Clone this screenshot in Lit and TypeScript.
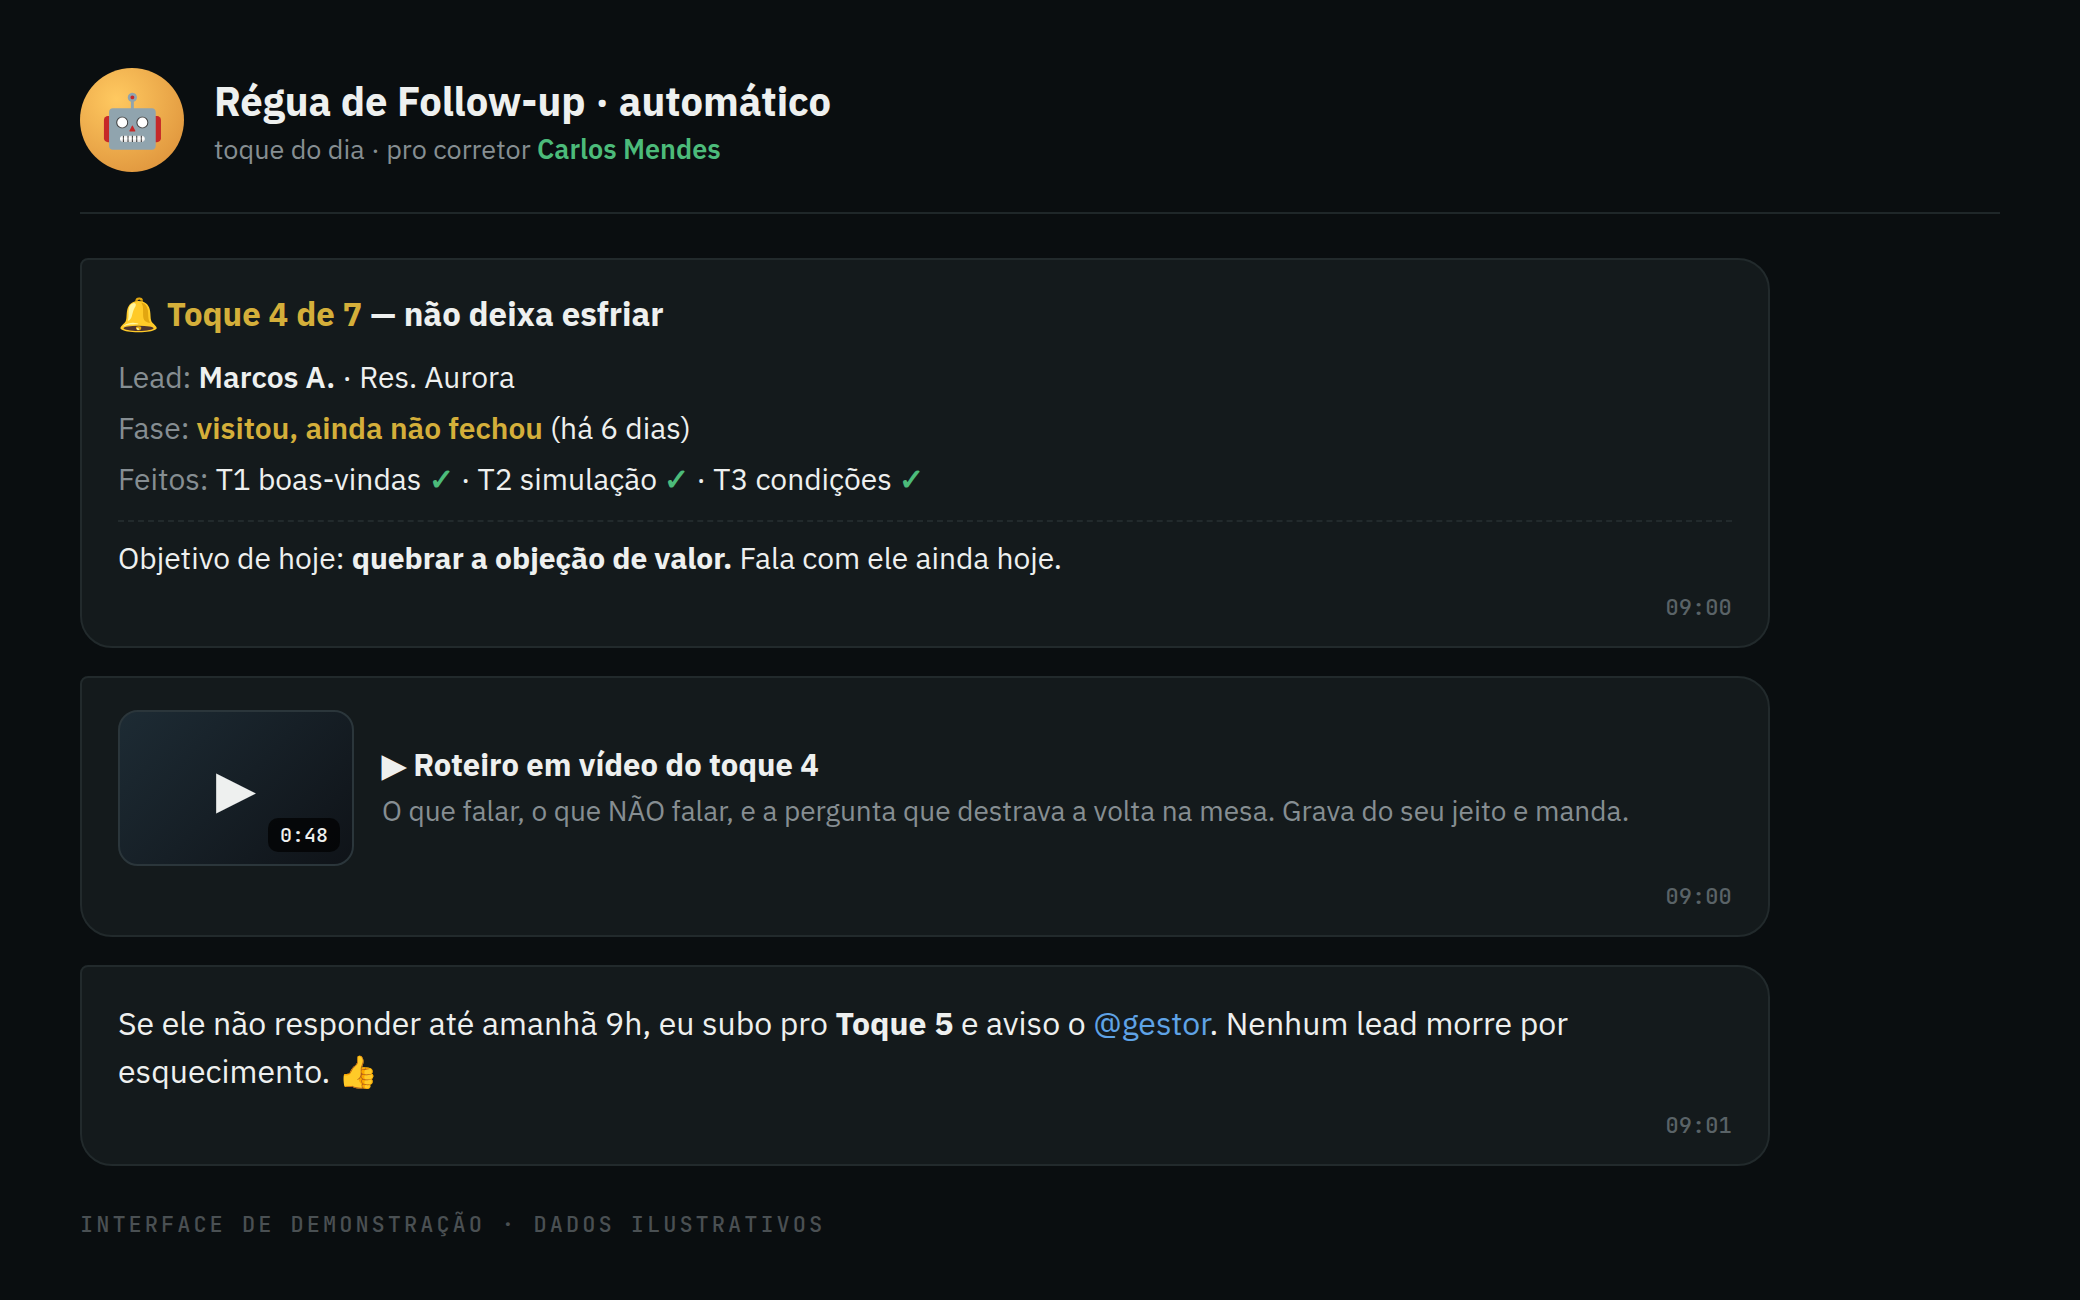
import { LitElement, html, css, type TemplateResult } from "lit";
import { customElement, property } from "lit/decorators.js";

@customElement("chat-bubble")
class ChatBubble extends LitElement {
  @property() time = "";

  static styles = css`
    :host {
      display: block;
    }
    .bubble {
      box-sizing: border-box;
      width: 88%;
      padding: 32px 36px 23px;
      border: 2px solid #222a2c;
      border-radius: 8px 32px 32px 32px;
      background: #141a1c;
    }
    .time {
      display: block;
      margin-top: 15px;
      color: #5a6367;
      font: 500 22px/31px "JetBrains Mono", "IBM Plex Mono", "Liberation Mono", monospace;
      text-align: right;
    }
  `;

  render(): TemplateResult {
    return html`
      <article class="bubble">
        <slot></slot>
        <time class="time">${this.time}</time>
      </article>
    `;
  }
}

@customElement("app-root")
class AppRoot extends LitElement {
  private steps = ["T1 boas-vindas", "T2 simulação", "T3 condições"];

  static styles = css`
    :host {
      display: block;
      box-sizing: border-box;
      min-height: 100vh;
      padding: 68px 80px 40px;
      background: #0a0e10;
      color: #eef0ef;
      font-family: "IBM Plex Sans", "Liberation Sans", sans-serif;
    }
    * {
      box-sizing: border-box;
    }
    h1,
    h2,
    h3,
    p {
      margin: 0;
    }
    strong {
      font-weight: 700;
    }
    .semibold {
      font-weight: 600;
    }
    .header {
      display: flex;
      align-items: center;
      gap: 30px;
      padding-bottom: 40px;
      border-bottom: 2px solid #1f2729;
    }
    .avatar {
      display: grid;
      place-items: center;
      flex: none;
      width: 104px;
      height: 104px;
      border-radius: 50%;
      background: radial-gradient(circle at 35% 30%, #ffc960, #d98b36);
      font-size: 52px;
      line-height: 60px;
    }
    .title {
      font-size: 40px;
      font-weight: 700;
      line-height: 58px;
    }
    .subtitle {
      color: #868e92;
      font-size: 27px;
      line-height: 38px;
    }
    .thread {
      display: flex;
      flex-direction: column;
      gap: 28px;
      margin-top: 44px;
    }
    .heading {
      margin-bottom: 15px;
      font-size: 33px;
      font-weight: 700;
      line-height: 44px;
    }
    .row {
      font-size: 30px;
      line-height: 51px;
    }
    .label {
      color: #868e92;
    }
    .amber {
      color: #d4af3a;
    }
    .green {
      color: #4cbb7a;
    }
    .check {
      color: #4cbb7a;
      font-family: "Liberation Sans", sans-serif;
      font-weight: 600;
    }
    .goal {
      margin-top: 15px;
      padding-top: 17px;
      border-top: 2px dashed #222a2c;
      font-size: 30px;
      line-height: 38px;
    }
    .video {
      display: flex;
      align-items: center;
      gap: 28px;
    }
    .thumb {
      position: relative;
      display: grid;
      place-items: center;
      flex: none;
      width: 236px;
      height: 156px;
      padding: 0;
      border: 2px solid #2b363b;
      border-radius: 20px;
      background: linear-gradient(135deg, #1d2b34, #0f1318);
      color: #eef0ef;
      font: 400 52px/60px "IBM Plex Sans", "Liberation Sans", sans-serif;
      cursor: pointer;
    }
    .duration {
      position: absolute;
      right: 12px;
      bottom: 12px;
      padding: 4px 12px;
      border-radius: 10px;
      background: rgba(0, 0, 0, 0.7);
      font: 500 20px/26px "JetBrains Mono", "IBM Plex Mono", "Liberation Mono", monospace;
    }
    .video-title {
      font-size: 31px;
      font-weight: 700;
      line-height: 46px;
    }
    .video-text {
      color: #868e92;
      font-size: 28px;
      line-height: 46px;
    }
    .message {
      font-size: 32px;
      line-height: 48px;
    }
    .mention {
      color: #5fa3e6;
      text-decoration: none;
    }
    .footer {
      margin-top: 43px;
      color: #4a5053;
      font: 500 22px/32px "JetBrains Mono", "IBM Plex Mono", "Liberation Mono", monospace;
      letter-spacing: 3px;
      text-transform: uppercase;
    }
  `;

  render(): TemplateResult {
    return html`
      <header class="header">
        <div class="avatar">🤖</div>
        <div>
          <h1 class="title">Régua de Follow-up · automático</h1>
          <p class="subtitle">toque do dia · pro corretor <strong class="green semibold">Carlos Mendes</strong></p>
        </div>
      </header>
      <main class="thread">
        <chat-bubble time="09:00">
          <h2 class="heading">🔔 <span class="amber">Toque 4 de 7</span> — não deixa esfriar</h2>
          <p class="row"><span class="label">Lead:</span> <strong class="semibold">Marcos A.</strong> · Res. Aurora</p>
          <p class="row"><span class="label">Fase:</span> <strong class="amber semibold">visitou, ainda não fechou</strong> (há 6 dias)</p>
          <p class="row"><span class="label">Feitos:</span> ${this.steps.map(
            (step, i) => html`${i ? " · " : ""}${step} <span class="check">✓</span>`,
          )}</p>
          <p class="goal">Objetivo de hoje: <strong>quebrar a objeção de valor.</strong> Fala com ele ainda hoje.</p>
        </chat-bubble>
        <chat-bubble time="09:00">
          <div class="video">
            <button class="thumb" type="button">▶<span class="duration">0:48</span></button>
            <div>
              <h3 class="video-title">▶ Roteiro em vídeo do toque 4</h3>
              <p class="video-text">O que falar, o que NÃO falar, e a pergunta que destrava a volta na mesa. Grava do seu jeito e manda.</p>
            </div>
          </div>
        </chat-bubble>
        <chat-bubble time="09:01">
          <p class="message">Se ele não responder até amanhã 9h, eu subo pro <strong>Toque 5</strong> e aviso o <a class="mention" href="#gestor">@gestor</a>. Nenhum lead morre por esquecimento. 👍</p>
        </chat-bubble>
      </main>
      <footer class="footer">Interface de demonstração · dados ilustrativos</footer>
    `;
  }
}
